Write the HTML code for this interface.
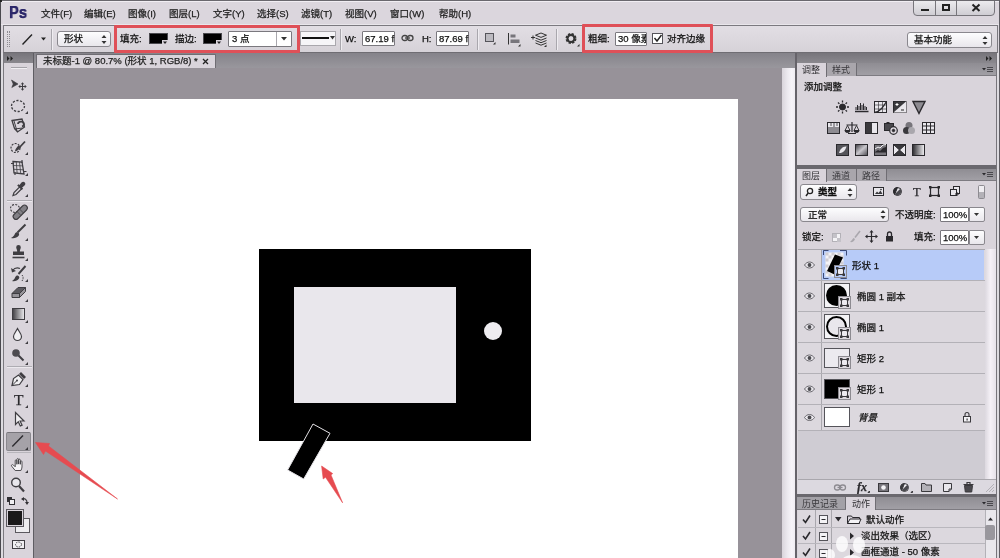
<!DOCTYPE html>
<html lang="zh-CN"><head><meta charset="utf-8"><title>Ps</title>
<style>
*{box-sizing:border-box;margin:0;padding:0}
html,body{width:1000px;height:558px;overflow:hidden;background:#dbd6dd}
body{position:relative;font-family:"Liberation Sans","Noto Sans CJK SC",sans-serif;font-size:11px;color:#111;line-height:1}
.a{position:absolute}
.t{position:absolute;white-space:nowrap;will-change:transform;-webkit-text-stroke:.25px currentColor}
#menubar{left:0;top:0;width:1000px;height:25px;background:#dbd6dd;border-top:2px solid #f1eef3;border-bottom:1px solid #e9e6eb}
#optbar{left:3px;top:25px;width:995px;height:28px;background:linear-gradient(#e2dee4,#d6d2d8);border:1px solid #7b797f;border-bottom-color:#6f6d73}
#work{left:0;top:53px;width:797px;height:505px;background:#979299}
.mi{top:9px;font-size:9.5px;color:#222}
.field{background:#fff;border:1px solid #7a787e;border-radius:1px}
.dd{background:linear-gradient(#fdfdfe,#e9e7ec);border:1px solid #8a888e;border-radius:3px}
.pt{font-size:9px;color:#2e2d31;margin-top:.5px;-webkit-text-stroke:0}
.ln{font-size:9.5px;color:#111}
.lr{left:798px;width:187px;height:1px;background:#b3b1b7}
</style></head><body>
<!-- MENUBAR -->
<div id="menubar" class="a"></div>
<div class="t" style="left:8.500px;top:4.500px;font-size:16px;font-weight:bold;color:#2b2669;text-shadow:0 0 .6px #2b2669;transform:scaleX(.92);transform-origin:0 0">Ps</div>
<div class="t mi" id="m1" style="left:41px">文件(F)</div>
<div class="t mi" id="m2" style="left:84px">编辑(E)</div>
<div class="t mi" id="m3" style="left:128px">图像(I)</div>
<div class="t mi" id="m4" style="left:169px">图层(L)</div>
<div class="t mi" id="m5" style="left:213px">文字(Y)</div>
<div class="t mi" id="m6" style="left:257px">选择(S)</div>
<div class="t mi" id="m7" style="left:301px">滤镜(T)</div>
<div class="t mi" id="m8" style="left:345px">视图(V)</div>
<div class="t mi" id="m9" style="left:390px">窗口(W)</div>
<div class="t mi" id="m10" style="left:438.500px">帮助(H)</div>
<div class="a" style="left:913px;top:-3px;width:82px;height:19px;border:1px solid #77757b;border-radius:0 0 4px 4px;background:linear-gradient(#f2f1f4,#cfcdd3)"></div>
<div class="a" style="left:935px;top:0;width:1px;height:15px;background:#77757b"></div>
<div class="a" style="left:956px;top:0;width:1px;height:15px;background:#77757b"></div>
<div class="a" style="left:921px;top:9px;width:8px;height:2px;background:#222"></div>
<div class="a" style="left:942px;top:4px;width:8px;height:7px;border:2px solid #222;border-top-width:2px"></div>
<svg class="a" style="left:971px;top:3px" width="10" height="10"><path d="M1.500 1.500l7 6.500M8.500 1.500l-7 6.500" stroke="#222" stroke-width="2" fill="none"/></svg>

<!-- OPTBAR -->
<div id="optbar" class="a"></div>
<div class="a" style="left:7px;top:31px;width:3px;height:16px;border-left:1px dotted #8d8b91;border-right:1px dotted #8d8b91"></div>
<svg class="a" style="left:20px;top:30px" width="30" height="18"><path d="M2.500 14.500l9.500-10" stroke="#222" stroke-width="1.400" fill="none"/><path d="M21 7.500h5l-2.500 3z" fill="#222"/></svg>
<div class="a" style="left:51px;top:29px;width:1px;height:21px;background:#a9a7ad;border-right:1px solid #efedf1;box-sizing:content-box"></div>
<div class="a dd" style="left:57px;top:31px;width:54px;height:16px"></div>
<div class="t" style="left:64px;top:34px;font-size:9.5px">形状</div>
<svg class="a" style="left:101px;top:35px" width="6" height="9"><path d="M3 0l2.500 3h-5zM3 9l2.500-3h-5z" fill="#333"/></svg>
<div class="a" style="left:114px;top:25px;width:186px;height:28px;border:3px solid #df5058;border-radius:1px"></div>
<div class="t" style="left:120px;top:34px;font-size:9.5px">填充:</div>
<div class="a" style="left:149px;top:33px;width:19px;height:11px;background:#000;border:1px solid #4a494e"></div>
<svg class="a" style="left:162px;top:40px" width="6" height="5"><rect width="6" height="5" fill="#d9d4db"/><path d="M1 1.500h4l-2 2.500z" fill="#222"/></svg>
<div class="t" style="left:175px;top:34px;font-size:9.5px">描边:</div>
<div class="a" style="left:203px;top:33px;width:19px;height:11px;background:#000;border:1px solid #4a494e"></div>
<svg class="a" style="left:216px;top:40px" width="6" height="5"><rect width="6" height="5" fill="#d9d4db"/><path d="M1 1.500h4l-2 2.500z" fill="#222"/></svg>
<div class="a field" style="left:228px;top:31px;width:64px;height:16px"></div>
<div class="a" style="left:276px;top:32px;width:1px;height:14px;background:#a9a7ad"></div>
<div class="t" style="left:232px;top:34px;font-size:9.5px">3 点</div>
<svg class="a" style="left:281px;top:37px" width="7" height="4"><path d="M0 0h6l-3 3.500z" fill="#333"/></svg>
<div class="a" style="left:300px;top:31px;width:36px;height:15px;background:#f6f5f8;border:1px solid #a9a7ad"></div>
<div class="a" style="left:302px;top:37px;width:27px;height:2px;background:#111"></div>
<svg class="a" style="left:330px;top:36px" width="6" height="4"><path d="M0 0h5l-2.500 3.500z" fill="#333"/></svg>
<div class="a" style="left:340px;top:29px;width:1px;height:21px;background:#a9a7ad;border-right:1px solid #efedf1;box-sizing:content-box"></div>
<div class="t" style="left:345px;top:34px;font-size:9.5px">W:</div>
<div class="a field" style="left:362px;top:31px;width:33px;height:15px"></div>
<div class="t" style="left:365px;top:34px;font-size:9.5px">67.19 f</div>
<svg class="a" style="left:401px;top:34px" width="13" height="8" fill="none" stroke="#444" stroke-width="1.300"><rect x="1" y="1.500" width="5.500" height="5" rx="2.500"/><rect x="6.500" y="1.500" width="5.500" height="5" rx="2.500"/><path d="M4 4h5"/></svg>
<div class="t" style="left:422px;top:34px;font-size:9.5px">H:</div>
<div class="a field" style="left:436px;top:31px;width:33px;height:15px"></div>
<div class="t" style="left:439px;top:34px;font-size:9.5px">87.69 f</div>
<div class="a" style="left:477px;top:29px;width:1px;height:21px;background:#a9a7ad;border-right:1px solid #efedf1;box-sizing:content-box"></div>
<svg class="a" style="left:484px;top:31px" width="100" height="18" fill="none" stroke="#333">
<rect x="1.500" y="2.500" width="8" height="8" fill="#bcbac0" stroke="#55545a"/>
<path d="M9 13.500h2.500v-2.500z" fill="#333" stroke="none"/>
<path d="M24.500 2v11.500"/><rect x="26.500" y="3.500" width="5" height="3" fill="#77757b" stroke="none"/><rect x="26.500" y="8.500" width="9" height="3.500" fill="#77757b" stroke="none"/>
<path d="M34 15.500h2.500v-2.500z" fill="#333" stroke="none"/>
<path d="M47 6.500h4M49 4.500v4" stroke-width="1"/>
<path d="M56 2.500l5.500 2.200-5.500 2.200-5.500-2.200zM50.500 7.500l5.500 2.200 5.500-2.200M50.500 10l5.500 2.200 5.500-2.200M50.500 12.500l5.500 2.200 5.500-2.200" stroke-width="1" transform="translate(1 -0.500)"/>
<path d="M60 16h2.500v-2.500z" fill="#333" stroke="none"/>
</svg>
<div class="a" style="left:556px;top:29px;width:1px;height:21px;background:#a9a7ad;border-right:1px solid #efedf1;box-sizing:content-box"></div>
<svg class="a" style="left:564px;top:31px" width="18" height="18"><circle cx="7" cy="7.500" r="4" fill="none" stroke="#333" stroke-width="3" stroke-dasharray="2 1.140"/><circle cx="7" cy="7.500" r="3.500" fill="none" stroke="#333" stroke-width="2"/><path d="M13 15.500h2.500v-2.500z" fill="#333"/></svg>
<div class="a" style="left:582px;top:24px;width:131px;height:29px;border:3px solid #df5058;border-radius:1px"></div>
<div class="t" style="left:588px;top:34px;font-size:9.5px">粗细:</div>
<div class="a field" style="left:615px;top:32px;width:32px;height:14px;overflow:hidden"></div>
<div class="t" style="left:618px;top:34px;font-size:9.5px;width:28px;overflow:hidden">30 像素</div>
<div class="a" style="left:652px;top:33px;width:11px;height:11px;background:#fff;border:1px solid #55545a"></div>
<svg class="a" style="left:653px;top:34px" width="10" height="9"><path d="M1.500 4l2.500 3 4.500-6" stroke="#222" stroke-width="1.400" fill="none"/></svg>
<div class="t" style="left:667px;top:34px;font-size:9.5px">对齐边缘</div>
<div class="a dd" style="left:907px;top:32px;width:85px;height:16px"></div>
<div class="t" style="left:914px;top:35px;font-size:9.5px">基本功能</div>
<svg class="a" style="left:982px;top:36px" width="6" height="9"><path d="M3 0l2.500 3h-5zM3 9l2.500-3h-5z" fill="#333"/></svg>

<!-- WORK -->
<div id="work" class="a"></div>
<div class="a" style="left:34px;top:53px;width:763px;height:15px;background:linear-gradient(#85838a,#99979d)"></div>
<div class="a" style="left:36px;top:54px;width:180px;height:14px;background:#d9d4db;border:1px solid #6f6d73;border-bottom:none;border-radius:1px 1px 0 0"></div>
<div class="t" style="left:43px;top:56px;font-size:9.5px;color:#222">未标题-1 @ 80.7% (形状 1, RGB/8) *</div>
<svg class="a" style="left:202px;top:58px" width="7" height="7"><path d="M1 1l5 5M6 1l-5 5" stroke="#222" stroke-width="1.300"/></svg>
<div class="a" style="left:80px;top:99px;width:658px;height:459px;background:#fff"></div>
<div class="a" style="left:782px;top:68px;width:13px;height:490px;background:linear-gradient(90deg,#d9d4db,#ebe8ee 40%,#f7f4f9 75%,#efecf2)"></div>
<div class="a" style="left:795px;top:53px;width:2px;height:505px;background:#66636a"></div>
<div class="a" style="left:259px;top:249px;width:272px;height:192px;background:#000"></div>
<div class="a" style="left:294px;top:287px;width:162px;height:116px;background:#e9e7ec"></div>
<div class="a" style="left:484px;top:322px;width:18px;height:18px;border-radius:50%;background:#eeecf0"></div>
<svg class="a" style="left:0;top:53px" width="797" height="505" viewBox="0 53 797 505">
<path d="M313 424L330 433.300 303.700 479 287.600 470z" fill="#000" stroke="#e4e2e6" stroke-width="1"/>
<path d="M309 440.500L291 470 303.500 477 324.500 440.500z" fill="#000" stroke="none"/>
<path d="M321.600 466L332.700 473.600 331 475 342.600 502.800 325.500 477.200 323.200 479z" fill="#e64b50" stroke="#e64b50" stroke-width=".6" stroke-linejoin="round"/>
<path d="M35.500 442.500L49.500 443.500 48.500 446 117.500 499 45.500 451 43.500 454.500z" fill="#e64b50" stroke="#e64b50" stroke-width=".6" stroke-linejoin="round"/>
</svg>

<!-- TOOLS -->
<div class="a" style="left:0;top:53px;width:5px;height:505px;background:#dddbe0"></div>
<div class="a" style="left:3px;top:53px;width:31px;height:505px;background:#d9d4db;border-left:1px solid #7b797f;border-right:1px solid #5f5d63"></div>
<div class="a" style="left:4px;top:53px;width:29px;height:10px;background:linear-gradient(#77757b,#8a888e)"></div>
<svg class="a" style="left:7px;top:56px" width="8" height="5"><path d="M0 0l2.500 2.500-2.500 2.500zM3.500 0l2.500 2.500-2.500 2.500z" fill="#222"/></svg>
<div class="a" style="left:11px;top:67px;width:16px;height:2px;border-top:1px solid #a5a3a9;border-bottom:1px solid #f0eef2"></div>
<div class="a" style="left:6px;top:432px;width:25px;height:19px;background:#a5a2a8;border:1px solid #8a888e;border-top-color:#77757b;border-radius:2px"></div>
<svg class="a" style="left:0;top:53px;opacity:.88" width="40" height="505" viewBox="0 53 40 505" fill="none" stroke="#2a292d" stroke-width="1.2">
<g id="corner-tris" fill="#2a292d" stroke="none">
<path d="M28 111v3h-3zM28 131v3h-3zM28 152v3h-3zM28 173v3h-3zM28 194v3h-3zM28 217v3h-3zM28 238v3h-3zM28 258v3h-3zM28 279v3h-3zM28 299v3h-3zM28 320v3h-3zM28 341v3h-3zM28 362v3h-3zM28 384v3h-3zM28 405v3h-3zM28 426v3h-3zM28 447v3h-3zM28 470v3h-3z"/>
</g>
<!-- move -->
<path d="M11.500 80L18 84 11.800 87.500 13.200 84z" fill="#2a292d" stroke="#2a292d" stroke-width=".6" stroke-linejoin="round"/>
<path d="M22.500 83.500v6M19.500 86.500h6" stroke-width="1"/>
<path d="M22.500 82.300l1.700 2h-3.400zM22.500 90.700l1.700-2h-3.400zM18.300 86.500l2-1.700v3.400zM26.700 86.500l-2-1.700v3.400z" fill="#2a292d" stroke="none"/>
<!-- ellipse marquee -->
<ellipse cx="18" cy="106" rx="6.500" ry="5.500" stroke-dasharray="2.200 1.500" stroke-width="1.300"/>
<!-- poly lasso -->
<path d="M12 120.500l10-1.500 2.500 8-7 5-3-3.500z" stroke-width="1.300"/>
<path d="M14 121l3 10M14.500 129l8-1" stroke-width="1"/>
<path d="M18 124a3 2.500 0 1 1 4 2.500" stroke-width="1.800"/>
<!-- quick select -->
<ellipse cx="15.500" cy="148" rx="4.500" ry="4.500" stroke-dasharray="2 1.300" stroke-width="1.200"/>
<path d="M25 141.500l-6 6.500" stroke-width="1.800"/>
<path d="M15 151.500c2-.500 4.500-2 5.500-4.500l-2-1.500c-1.500 1.500-3.500 3.500-3.500 6z" fill="#2a292d" stroke="none"/>
<!-- crop/perspective -->
<path d="M13 161.500l9 .5 2 12-10-1z" stroke-width="1.300"/>
<path d="M11 163.500h3M22 160v3M24 171.500h2.500M15 172v3" stroke-width="1.200"/>
<path d="M16.300 162l.8 11M19.500 162l1.200 11.500M13.300 165.500l9.500.4M13.700 169.300l9.800.5" stroke-width=".8"/>
<!-- eyedropper -->
<path d="M13 195.500l1-3 6-6 2 2-6 6z" stroke-width="1.200"/>
<path d="M19.500 185l2-2.500c1-1 2.500-1 3.300 0s.7 2-.3 3l-2.500 2.300 1 1-1.300 1.300-4.500-4.500 1.300-1.300z" fill="#2a292d" stroke="none"/>
<!-- sep -->
<path d="M7 200.500h25" stroke="#a9a7ad" stroke-width="1"/>
<path d="M7 201.500h25" stroke="#efedf1" stroke-width="1"/>
<!-- healing -->
<ellipse cx="15" cy="208.500" rx="4.500" ry="4" stroke-dasharray="2 1.300" stroke-width="1.100"/>
<path d="M14 214.500l8.500-8.500a2.800 2.800 0 0 1 4 4l-8.500 8.500a2.800 2.800 0 0 1-4-4z" fill="#77757b" stroke="#2a292d" stroke-width="1.100"/>
<path d="M17 211.500l4 4M19.500 209l4 4" stroke-width=".8"/>
<!-- brush -->
<path d="M25.500 224.500l-8 8" stroke-width="2"/>
<path d="M11 238c3 .8 6-.2 7.800-2.500 .8-1.200.2-2.500-1-3-1.300-.5-2.500.3-3 1.500-.6 1.800-2 3.200-3.800 4z" fill="#2a292d" stroke="none"/>
<!-- stamp -->
<path d="M18.500 245a2.300 2.300 0 0 1 2.300 2.300c0 1.500-1 2.200-1 4.200h4.200v3.500h-11v-3.500h4.200c0-2-1-2.700-1-4.200a2.300 2.300 0 0 1 2.300-2.300z" fill="#2a292d" stroke="none"/>
<path d="M12.500 257.500h12" stroke-width="1.600"/>
<!-- history brush -->
<path d="M25.500 266l-7 8" stroke-width="1.900"/>
<path d="M12 281c2.800.6 5.500-.3 7-2.500.7-1.100.2-2.300-.9-2.800-1.200-.4-2.300.3-2.800 1.400-.5 1.700-1.700 3-3.300 3.900z" fill="#2a292d" stroke="none"/>
<path d="M12.500 270.500c2-2.500 5-3 7.500-2" stroke-width="1.200"/>
<path d="M11 268l1 4.500 4-1.500z" fill="#2a292d" stroke="none"/>
<path d="M22 275c1.500 1.500 1.500 4 0 6" stroke-width="1" stroke-dasharray="1.500 1"/>
<!-- eraser -->
<path d="M12 293.500l6-6h7.500l-6 6z" fill="#4a494e" stroke="#2a292d" stroke-width="1"/>
<path d="M12 293.500h7.500v4h-7.500zM19.500 293.500l6-6v4l-6 6z" fill="#8d8b91" stroke="#2a292d" stroke-width="1"/>
<!-- gradient -->
<defs><linearGradient id="gg" x1="0" x2="1"><stop offset="0" stop-color="#2a292d"/><stop offset="1" stop-color="#f4f3f6"/></linearGradient></defs>
<rect x="12.500" y="308.500" width="12" height="11" fill="url(#gg)" stroke="#2a292d" stroke-width="1"/>
<!-- blur drop -->
<path d="M17.500 328.500c-1.500 3-4 5.500-4 8a4 4 0 0 0 8 0c0-2.500-2.500-5-4-8z" fill="#f4f3f6" stroke-width="1.200"/>
<!-- dodge -->
<circle cx="16" cy="353" r="3.800" fill="#3a393d" stroke="none"/>
<path d="M18.500 355.500l5 5" stroke-width="2"/>
<!-- sep -->
<path d="M7 366.500h25" stroke="#a9a7ad" stroke-width="1"/>
<path d="M7 367.500h25" stroke="#efedf1" stroke-width="1"/>
<!-- pen -->
<path d="M12 385.500l1.500-7 5-3.500 4.500 4.500-3.500 5z" fill="#f4f3f6" stroke-width="1.200"/>
<path d="M12 385.500l4.500-4.500" stroke-width="1"/>
<circle cx="17" cy="380.500" r="1" fill="#2a292d" stroke="none"/>
<path d="M19 374l2-2 5 5-2 2z" fill="#2a292d" stroke="none"/>
<!-- path select -->
<path d="M15.500 412.500v12l2.800-2.800 2 4.300 1.800-.8-2-4.200h3.900z" fill="#f4f3f6" stroke-width="1.200"/>
<!-- line -->
<path d="M12.300 446.500L23 435.500" stroke="#1c1b1f" stroke-width="1.400"/>
<!-- sep -->
<path d="M7 452.500h24" stroke="#b3b1b7" stroke-width="1"/>
<!-- hand -->
<path d="M15.200 470.500l-3.500-4.300c-.9-1.200.7-2.200 1.700-1.200l1.800 1.800v-6c0-1.300 1.700-1.300 1.700 0v3.500-4.800c0-1.300 1.700-1.300 1.700 0v4.600-4c0-1.300 1.700-1.300 1.700 0v4.200-2.500c0-1.200 1.700-1.200 1.700 0v5.200c0 1.600-.7 2.300-1.100 3.500z" fill="#faf9fb" stroke="#2a292d" stroke-width=".9" stroke-linejoin="round"/>
<!-- zoom -->
<circle cx="16" cy="482.500" r="4.300" fill="#eceaef" stroke-width="1.400"/>
<path d="M19 486l5 5.500" stroke-width="2.200"/>
<!-- default colors / swap -->
<rect x="7" y="497" width="5" height="5" fill="#1c1b1f" stroke="none"/>
<rect x="9.500" y="499.500" width="5" height="5" fill="#f4f3f6" stroke="#1c1b1f" stroke-width="1"/>
<path d="M22.500 499c2.500-1 4.500 1 4.500 3.500" stroke-width="1.200"/>
<path d="M21 499l3-2v4zM27 505l-2-3h4z" fill="#1c1b1f" stroke="none"/>
<!-- fg/bg -->
<rect x="15.500" y="518.500" width="14" height="14" fill="#f2f1f4" stroke="#4a494e" stroke-width="1"/>
<rect x="7.500" y="510.500" width="15" height="15" fill="#000" stroke="#d9d4db" stroke-width="1"/>
<rect x="6.500" y="509.500" width="17" height="17" fill="none" stroke="#4a494e" stroke-width="1"/>
<!-- quick mask -->
<rect x="12.500" y="540.500" width="12" height="8" fill="#f4f3f6" stroke-width="1"/>
<ellipse cx="18.500" cy="544.500" rx="3" ry="2.500" stroke-dasharray="1.500 1" stroke-width="1"/>
</svg>
<div class="t" style="left:13.500px;top:392px;font-family:'Liberation Serif',serif;font-size:15.500px;color:#2a292d">T</div>

<!-- PANELS -->
<div class="a" style="left:797px;top:53px;width:203px;height:505px;background:#d9d4db"></div>
<div class="a" style="left:996px;top:53px;width:4px;height:505px;background:#dddbe0;border-left:1px solid #77757b"></div>
<div class="a" style="left:797px;top:53px;width:199px;height:10px;background:linear-gradient(#77757b,#8a888e)"></div>
<svg class="a" style="left:986px;top:56px" width="8" height="5"><path d="M0 0l2.500 2.500-2.500 2.500zM3.500 0l2.500 2.500-2.500 2.500z" fill="#222"/></svg>
<!-- adjustments -->
<div class="a" style="left:797px;top:63px;width:199px;height:13px;background:linear-gradient(#8f8d93,#a19fa5);border-bottom:1px solid #7d7b81"></div>
<div class="a" style="left:797px;top:63px;width:30px;height:14px;background:#d9d4db;border-right:1px solid #6f6d73"></div>
<div class="a" style="left:827px;top:63px;width:30px;height:13px;background:#a9a6ac;border-right:1px solid #6f6d73"></div>
<div class="t pt" style="left:802px;top:65px">调整</div>
<div class="t pt" style="left:832px;top:65px;color:#3a393d">样式</div>
<svg class="a" style="left:982px;top:66px" width="12" height="8"><path d="M0 2h4l-2 2.500z" fill="#2a292d"/><path d="M5 1.500h6M5 3.500h6M5 5.500h6" stroke="#4a494e" stroke-width="1"/></svg>
<div class="t" style="left:804px;top:82px;font-size:9.5px">添加调整</div>
<svg class="a" style="left:797px;top:95px" width="199" height="70" viewBox="797 95 199 70" fill="none" stroke="#2a292d" stroke-width="1">
<!-- row1 -->
<circle cx="842.500" cy="107" r="3" fill="#2a292d"/><path d="M842.500 100.500v2M842.500 111.500v2M836 107h2M847 107h2M838 102.500l1.400 1.400M845.600 110.100l1.400 1.400M847 102.500l-1.400 1.400M839.400 110.100l-1.400 1.400" stroke-width="1.300"/>
<path d="M855 111.500h13.500" stroke-width="1.500"/><path d="M856 110v-3M857.500 110v-5M859 110v-4M860.500 110v-7M862 110v-5M863.500 110v-6.500M865 110v-4M866.500 110v-3" stroke-width="1"/>
<rect x="874.500" y="101.500" width="12" height="11" fill="#e9e7ec"/><path d="M874.500 105h12M874.500 109h12M878.500 101.500v11M882.500 101.500v11" stroke-width=".6"/><path d="M874.500 112.500c6-1 9-6 12-11" stroke-width="1.300"/>
<rect x="893.500" y="101.500" width="12.500" height="11" fill="#3a393d"/><path d="M893.500 112.500l12.500-11v11z" fill="#e9e7ec" stroke="none"/><path d="M895.500 104.500h3M897 103v3" stroke="#fff" stroke-width="1"/><path d="M901 110h3" stroke="#222" stroke-width="1"/>
<path d="M913 101.500h12l-6 12z" fill="#8d8b91" stroke-width="1.400"/>
<!-- row2 -->
<rect x="827.500" y="122.500" width="12" height="11" fill="#8d8b91"/><rect x="828" y="123" width="11" height="4" fill="#e9e7ec" stroke="none"/><path d="M831 123v3M834 123v4M837 123v3" stroke-width=".8"/>
<path d="M852 122v10M846.500 125h11M848 133.500h8" stroke-width="1.200"/><path d="M845 130.500h5l-2.500-5zM854 130.500h5l-2.500-5z" stroke-width=".9"/><path d="M845 130.500a2.500 2 0 0 0 5 0zM854 130.500a2.500 2 0 0 0 5 0z" fill="#2a292d"/>
<rect x="865.500" y="122.500" width="12" height="11" fill="#e9e7ec"/><rect x="866" y="123" width="6" height="10" fill="#3a393d" stroke="none"/>
<rect x="884.500" y="123.500" width="9" height="7" fill="#4a494e"/><rect x="886.500" y="122" width="3" height="1.500" fill="#2a292d" stroke="none"/><circle cx="893.500" cy="130.500" r="3.800" fill="#d9d4db" stroke-width="1.200"/><circle cx="893.500" cy="130.500" r="1.200" fill="#2a292d"/>
<circle cx="909" cy="125.500" r="3.500" fill="#77757b" stroke="none"/><circle cx="906.500" cy="130.500" r="3.500" fill="#3a393d" stroke="none"/><circle cx="911.500" cy="130.500" r="3.500" fill="#a9a7ad" stroke="none"/>
<rect x="922.500" y="122.500" width="12" height="11" fill="#e9e7ec"/><path d="M922.500 126h12M922.500 130h12M926.500 122.500v11M930.500 122.500v11" stroke-width="1"/>
<!-- row3 -->
<rect x="836.500" y="144.500" width="12" height="11" fill="#55545a"/><path d="M839 153c1-4 4-7 7.500-6.500-1 4-4 7-7.500 6.500z" fill="#e9e7ec" stroke="none"/>
<defs><linearGradient id="g3a" x1="0" y1="0" x2="1" y2="1"><stop offset="0" stop-color="#3a393d"/><stop offset=".5" stop-color="#c9c7cd"/><stop offset="1" stop-color="#4a494e"/></linearGradient><linearGradient id="g3b" x1="0" x2="1"><stop offset="0" stop-color="#2a292d"/><stop offset="1" stop-color="#f4f3f6"/></linearGradient></defs>
<rect x="855.500" y="144.500" width="12" height="11" fill="url(#g3a)"/>
<rect x="874.500" y="144.500" width="12" height="11" fill="#77757b"/><path d="M875 152l3-2 2 1 3-3 3-1v5.500h-11z" fill="#2a292d" stroke="none"/><path d="M875 149l3-2 2 1 3-3 3-.5" stroke="#f4f3f6" stroke-width="1"/>
<rect x="893.500" y="144.500" width="12" height="11" fill="#e9e7ec"/><path d="M893.500 144.500h12l-6 5.500zM893.500 155.500h12l-6-5.500z" fill="#3a393d"/>
<rect x="912.500" y="144.500" width="12" height="11" fill="url(#g3b)"/>
</svg>
<!-- layers panel -->
<div class="a" style="left:797px;top:165px;width:199px;height:4px;background:#6a686e"></div>
<div class="a" style="left:797px;top:169px;width:199px;height:12px;background:linear-gradient(#8f8d93,#a19fa5);border-bottom:1px solid #7d7b81"></div>
<div class="a" style="left:797px;top:169px;width:30px;height:13px;background:#d9d4db;border-right:1px solid #6f6d73"></div>
<div class="a" style="left:827px;top:169px;width:30px;height:12px;background:#a9a6ac;border-right:1px solid #6f6d73"></div>
<div class="a" style="left:857px;top:169px;width:30px;height:12px;background:#a9a6ac;border-right:1px solid #6f6d73"></div>
<div class="t pt" style="left:802px;top:171px">图层</div>
<div class="t pt" style="left:832px;top:171px;color:#3a393d">通道</div>
<div class="t pt" style="left:862px;top:171px;color:#3a393d">路径</div>
<svg class="a" style="left:982px;top:171px" width="12" height="8"><path d="M0 2h4l-2 2.500z" fill="#2a292d"/><path d="M5 1.500h6M5 3.500h6M5 5.500h6" stroke="#4a494e" stroke-width="1"/></svg>
<div class="a dd" style="left:800px;top:184px;width:57px;height:16px"></div>
<svg class="a" style="left:805px;top:187px" width="9" height="10"><circle cx="5" cy="4" r="2.600" fill="none" stroke="#222" stroke-width="1.300"/><path d="M3.200 6l-2.200 3" stroke="#222" stroke-width="1.500"/></svg>
<div class="t" style="left:818px;top:187px;font-size:9.5px;font-weight:bold">类型</div>
<svg class="a" style="left:847px;top:188px" width="6" height="9"><path d="M3 0l2.500 3h-5zM3 9l2.500-3h-5z" fill="#333"/></svg>
<svg class="a" style="left:870px;top:184px" width="120" height="17" viewBox="870 184 120 17" fill="none" stroke="#2a292d" stroke-width="1">
<rect x="873.500" y="187.500" width="10" height="8" fill="#e9e7ec"/><path d="M875 194l2-2.500 1.500 1.500 2-2.500 2 3.500z" fill="#3a393d" stroke="none"/><circle cx="881" cy="189.500" r=".8" fill="#2a292d" stroke="none"/>
<circle cx="897.500" cy="191.500" r="4" fill="#e9e7ec"/><path d="M897.500 187.500a4 4 0 0 0-2.800 6.800z" fill="#2a292d"/><path d="M894.700 194.300a4 4 0 0 0 5.600-5.600z" fill="#4a494e" stroke="none"/>
<rect x="930.500" y="187.500" width="8" height="8" stroke-width="1.200"/><rect x="929" y="186" width="2.500" height="2.500" fill="#2a292d" stroke="none"/><rect x="937.500" y="186" width="2.500" height="2.500" fill="#2a292d" stroke="none"/><rect x="929" y="194.500" width="2.500" height="2.500" fill="#2a292d" stroke="none"/><rect x="937.500" y="194.500" width="2.500" height="2.500" fill="#2a292d" stroke="none"/>
<rect x="953.500" y="186.500" width="6" height="7" fill="#e9e7ec"/><rect x="950.500" y="189.500" width="6" height="6" fill="#e9e7ec"/><path d="M957 192v4M955 194h4" stroke-width="1"/>
<rect x="978.500" y="185.500" width="6" height="13" rx="1" fill="#b3b1b7" stroke="#8d8b91"/><rect x="979" y="186" width="5" height="6" fill="#efedf1" stroke="none"/>
</svg>
<div class="t" style="left:913px;top:186px;font-family:'Liberation Serif',serif;font-size:12.5px;color:#2a292d">T</div>
<div class="a dd" style="left:800px;top:207px;width:89px;height:15px"></div>
<div class="t" style="left:808px;top:210px;font-size:9.5px">正常</div>
<svg class="a" style="left:880px;top:210px" width="6" height="9"><path d="M3 0l2.500 3h-5zM3 9l2.500-3h-5z" fill="#333"/></svg>
<div class="t" style="left:895px;top:210px;font-size:9.5px">不透明度:</div>
<div class="a field" style="left:940px;top:207px;width:29px;height:15px"></div>
<div class="t" style="left:943px;top:210px;font-size:9.5px">100%</div>
<div class="a dd" style="left:969px;top:207px;width:16px;height:15px;border-radius:0 2px 2px 0"></div>
<svg class="a" style="left:974px;top:213px" width="6" height="4"><path d="M0 0h5l-2.500 3z" fill="#333"/></svg>
<div class="t" style="left:802px;top:232px;font-size:9.5px">锁定:</div>
<svg class="a" style="left:830px;top:229px" width="70" height="16" viewBox="830 229 70 16" fill="none" stroke="#2a292d" stroke-width="1">
<rect x="832.500" y="233.500" width="8" height="8" fill="#f4f3f6" stroke="#b3b1b7"/><path d="M833 234h4v4h-4zM837 238h4v4h-4z" fill="#c4c2c8" stroke="none"/>
<path d="M860 231l-5 6.500" stroke="#a9a7ad" stroke-width="1.600"/><path d="M850 242c2 .5 4.500-.5 5-3l-1.500-1c-1 .5-1.500 2.500-3.500 4z" fill="#a9a7ad" stroke="none"/>
<path d="M871.500 231.500v10M866.500 236.500h10" stroke-width="1.200"/><path d="M871.500 230l2 2.500h-4zM871.500 243l2-2.500h-4zM865 236.500l2.500-2v4zM878 236.500l-2.500-2v4z" fill="#2a292d" stroke="none"/>
<rect x="886" y="236" width="7" height="5.500" fill="#2a292d" stroke="none"/><path d="M887.500 236v-2a2 2 0 0 1 4 0v2" stroke-width="1.300"/>
</svg>
<div class="t" style="left:914px;top:232px;font-size:9.5px">填充:</div>
<div class="a field" style="left:940px;top:230px;width:29px;height:15px"></div>
<div class="t" style="left:943px;top:233px;font-size:9.5px">100%</div>
<div class="a dd" style="left:969px;top:230px;width:16px;height:15px;border-radius:0 2px 2px 0"></div>
<svg class="a" style="left:974px;top:236px" width="6" height="4"><path d="M0 0h5l-2.500 3z" fill="#333"/></svg>
<!-- layer list -->
<div class="a" style="left:798px;top:249px;width:187px;height:182px;background:#dcd8de;border-top:1px solid #a9a7ad"></div>
<div class="a" style="left:798px;top:431px;width:187px;height:48px;background:#cfccd3"></div>
<div class="a" style="left:985px;top:249px;width:11px;height:230px;background:linear-gradient(90deg,#dcd8df,#f5f1f7 50%,#e6e2e9)"></div>
<div class="a" style="left:822px;top:250px;width:162px;height:30px;background:#b7cbf8"></div>
<div class="a" style="left:821px;top:249px;width:1px;height:182px;background:#a9a7ad"></div>
<div class="a lr" style="top:280px"></div><div class="a lr" style="top:311px"></div><div class="a lr" style="top:342px"></div><div class="a lr" style="top:373px"></div><div class="a lr" style="top:404px"></div><div class="a lr" style="top:430px"></div>
<svg class="a" style="left:798px;top:249px" width="187" height="182" viewBox="798 249 187 182" fill="none">
<g transform="translate(809.5 265)"><path d="M-5 0c2.500-4 7.500-4 10 0-2.500 4-7.500 4-10 0z" fill="#e9e7ec" stroke="#6a686e" stroke-width="1"/><circle r="1.900" fill="#4a494e"/></g><g transform="translate(809.5 296)"><path d="M-5 0c2.500-4 7.500-4 10 0-2.500 4-7.500 4-10 0z" fill="#e9e7ec" stroke="#6a686e" stroke-width="1"/><circle r="1.900" fill="#4a494e"/></g><g transform="translate(809.5 327)"><path d="M-5 0c2.500-4 7.500-4 10 0-2.500 4-7.500 4-10 0z" fill="#e9e7ec" stroke="#6a686e" stroke-width="1"/><circle r="1.900" fill="#4a494e"/></g><g transform="translate(809.5 358)"><path d="M-5 0c2.500-4 7.500-4 10 0-2.500 4-7.500 4-10 0z" fill="#e9e7ec" stroke="#6a686e" stroke-width="1"/><circle r="1.900" fill="#4a494e"/></g><g transform="translate(809.5 389)"><path d="M-5 0c2.500-4 7.500-4 10 0-2.500 4-7.500 4-10 0z" fill="#e9e7ec" stroke="#6a686e" stroke-width="1"/><circle r="1.900" fill="#4a494e"/></g><g transform="translate(809.5 417.5)"><path d="M-5 0c2.500-4 7.500-4 10 0-2.500 4-7.500 4-10 0z" fill="#e9e7ec" stroke="#6a686e" stroke-width="1"/><circle r="1.900" fill="#4a494e"/></g>
<!-- shape 1 thumb -->
<rect x="825.500" y="252.500" width="18" height="24" fill="#f4f3f6" stroke="none"/>
<path d="M825.500 252.500h3v3h-3zM831.500 252.500h3v3h-3zM837.500 252.500h3v3h-3zM828.500 255.500h3v3h-3zM834.500 255.500h3v3h-3zM840.500 255.500h3v3h-3zM825.500 258.500h3v3h-3zM840.500 261.500h3v3h-3zM825.500 264.500h3v3h-3zM825.500 270.500h3v3h-3zM828.500 273.500h3v3h-3z" fill="#d0ced4"/>
<path d="M835 254.500l8 3-8.500 17-7.500-3.500z" fill="#000"/>
<path d="M823.500 255v-4.500h5M840 250.500h6.500v5M823.500 273v5.500h5M846.500 274v4.500h-6" stroke="#3b4a78" stroke-width="1"/>
<rect x="834.5" y="265.5" width="12" height="12" fill="#b5c9f7" stroke="#8d8b91" stroke-width="1"/><rect x="837.5" y="268.5" width="6" height="6" fill="#eceaef" stroke="#3a393d" stroke-width="1"/><rect x="836" y="267" width="2.500" height="2.500" fill="#3a393d"/><rect x="842.5" y="267" width="2.500" height="2.500" fill="#3a393d"/><rect x="836" y="273.5" width="2.500" height="2.500" fill="#3a393d"/><rect x="842.5" y="273.5" width="2.500" height="2.500" fill="#3a393d"/>
<!-- ellipse copy -->
<rect x="824.500" y="283.500" width="25" height="24" fill="#f4f3f6" stroke="#55545a"/>
<circle cx="836.500" cy="295.500" r="10.500" fill="#000"/>
<rect x="838.5" y="296.5" width="12" height="12" fill="#dcd8de" stroke="#8d8b91" stroke-width="1"/><rect x="841.5" y="299.5" width="6" height="6" fill="#eceaef" stroke="#3a393d" stroke-width="1"/><rect x="840" y="298" width="2.500" height="2.500" fill="#3a393d"/><rect x="846.5" y="298" width="2.500" height="2.500" fill="#3a393d"/><rect x="840" y="304.5" width="2.500" height="2.500" fill="#3a393d"/><rect x="846.5" y="304.5" width="2.500" height="2.500" fill="#3a393d"/>
<rect x="824.500" y="314.500" width="25" height="24" fill="#f4f3f6" stroke="#55545a"/>
<circle cx="836.500" cy="326.500" r="9.500" fill="#e9e7ec" stroke="#000" stroke-width="2"/>
<rect x="838.5" y="327.5" width="12" height="12" fill="#dcd8de" stroke="#8d8b91" stroke-width="1"/><rect x="841.5" y="330.5" width="6" height="6" fill="#eceaef" stroke="#3a393d" stroke-width="1"/><rect x="840" y="329" width="2.500" height="2.500" fill="#3a393d"/><rect x="846.5" y="329" width="2.500" height="2.500" fill="#3a393d"/><rect x="840" y="335.5" width="2.500" height="2.500" fill="#3a393d"/><rect x="846.5" y="335.5" width="2.500" height="2.500" fill="#3a393d"/>
<rect x="824.500" y="348.500" width="25" height="19" fill="#eceaef" stroke="#55545a"/>
<rect x="838.5" y="356.5" width="12" height="12" fill="#dcd8de" stroke="#8d8b91" stroke-width="1"/><rect x="841.5" y="359.5" width="6" height="6" fill="#eceaef" stroke="#3a393d" stroke-width="1"/><rect x="840" y="358" width="2.500" height="2.500" fill="#3a393d"/><rect x="846.5" y="358" width="2.500" height="2.500" fill="#3a393d"/><rect x="840" y="364.5" width="2.500" height="2.500" fill="#3a393d"/><rect x="846.5" y="364.5" width="2.500" height="2.500" fill="#3a393d"/>
<rect x="824.500" y="379.500" width="25" height="19" fill="#000" stroke="#55545a"/>
<rect x="838.5" y="387.5" width="12" height="12" fill="#dcd8de" stroke="#8d8b91" stroke-width="1"/><rect x="841.5" y="390.5" width="6" height="6" fill="#eceaef" stroke="#3a393d" stroke-width="1"/><rect x="840" y="389" width="2.500" height="2.500" fill="#3a393d"/><rect x="846.5" y="389" width="2.500" height="2.500" fill="#3a393d"/><rect x="840" y="395.5" width="2.500" height="2.500" fill="#3a393d"/><rect x="846.5" y="395.5" width="2.500" height="2.500" fill="#3a393d"/>
<rect x="824.500" y="407.500" width="25" height="19" fill="#fff" stroke="#55545a"/>
<rect x="963.500" y="416.500" width="7" height="5.500" fill="#f4f3f6" stroke="#3a393d"/><path d="M965 416.500v-2a2 2 0 0 1 4 0v2" stroke="#3a393d" stroke-width="1.100"/><rect x="966.500" y="418.500" width="1.200" height="2" fill="#3a393d"/>
</svg>
<div class="t ln" style="left:852px;top:261px">形状 1</div>
<div class="t ln" style="left:857px;top:292px">椭圆 1 副本</div>
<div class="t ln" style="left:857px;top:323px">椭圆 1</div>
<div class="t ln" style="left:857px;top:354px">矩形 2</div>
<div class="t ln" style="left:857px;top:385px">矩形 1</div>
<div class="t ln" style="left:858px;top:413px;font-style:italic">背景</div>
<!-- bottom bar -->
<div class="a" style="left:798px;top:479px;width:198px;height:16px;background:#dcd9e0;border-top:1px solid #a9a7ad"></div>
<svg class="a" style="left:830px;top:480px" width="166" height="15" viewBox="830 480 166 15" fill="none" stroke="#3a393d" stroke-width="1">
<rect x="834.500" y="485" width="5.500" height="5" rx="2.500" stroke="#8d8b91" stroke-width="1.300"/><rect x="840" y="485" width="5.500" height="5" rx="2.500" stroke="#8d8b91" stroke-width="1.300"/><path d="M837.500 487.500h5" stroke="#8d8b91" stroke-width="1.300"/>
<path d="M868 492.500h1.500v-1.500z" fill="#3a393d"/>
<rect x="878.500" y="483.500" width="10" height="8" fill="#77757b"/><circle cx="883.500" cy="487.500" r="2.300" fill="#f4f3f6" stroke="none"/>
<circle cx="904.500" cy="487.500" r="4" fill="#f4f3f6"/><path d="M904.500 483.500a4 4 0 0 0-2.800 6.800z" fill="#3a393d"/><path d="M901.700 490.300a4 4 0 0 0 5.600-5.600z" fill="#4a494e" stroke="none"/><path d="M911 492.500h1.500v-1.500z" fill="#3a393d"/>
<path d="M921.500 491.500v-8h3.500l1 1.500h5.500v6.500z" fill="#b3b1b7"/>
<path d="M943.500 483.500h8v5.500l-2.500 2.500h-5.500z" fill="#e9e7ec"/><path d="M951.500 489h-2.500v2.500" />
<path d="M964.500 485.500h8l-.8 6.500h-6.400z" fill="#4a494e"/><path d="M963.500 484.500h10M967 484v-1.500h3v1.500" stroke-width="1.200"/>
<path d="M994 484l-8 8M994 487l-5 5M994 490l-2 2" stroke="#b3b1b7"/>
</svg>
<div class="t" style="left:857px;top:481px;font-family:'Liberation Serif',serif;font-style:italic;font-weight:bold;font-size:12px;color:#2a292d">fx</div>
<!-- actions panel -->
<div class="a" style="left:797px;top:494px;width:199px;height:3px;background:#6a686e"></div>
<div class="a" style="left:797px;top:497px;width:199px;height:13px;background:linear-gradient(#8f8d93,#a19fa5);border-bottom:1px solid #7d7b81"></div>
<div class="a" style="left:797px;top:497px;width:49px;height:12px;background:#a3a1a7;border-right:1px solid #6f6d73"></div>
<div class="a" style="left:846px;top:497px;width:30px;height:13px;background:#d9d4db;border-right:1px solid #6f6d73"></div>
<div class="t pt" style="left:802px;top:499px;color:#3a393d">历史记录</div>
<div class="t pt" style="left:852px;top:499px">动作</div>
<svg class="a" style="left:982px;top:500px" width="12" height="8"><path d="M0 2h4l-2 2.500z" fill="#2a292d"/><path d="M5 1.500h6M5 3.500h6M5 5.500h6" stroke="#4a494e" stroke-width="1"/></svg>
<div class="a" style="left:798px;top:510px;width:187px;height:48px;background:#dcd8de"></div>
<div class="a" style="left:815px;top:510px;width:1px;height:48px;background:#a9a7ad"></div>
<div class="a" style="left:831px;top:510px;width:1px;height:48px;background:#a9a7ad"></div>
<div class="a" style="left:798px;top:527px;width:187px;height:1px;background:#b9b7bd"></div>
<div class="a" style="left:798px;top:543px;width:187px;height:1px;background:#b9b7bd"></div>
<div class="a" style="left:985px;top:510px;width:11px;height:48px;background:#e9e7ec;border-left:1px solid #b3b1b7"></div>
<div class="a" style="left:985px;top:525px;width:10px;height:15px;background:#99979d;border-radius:2px"></div>
<svg class="a" style="left:798px;top:510px" width="198" height="48" viewBox="798 510 198 48" fill="none" stroke="#2a292d" stroke-width="1">
<path d="M803 519.500l2.500 3 4.500-7M803 536l2.500 3 4.500-7M803 552.500l2.500 3 4.500-7" stroke-width="1.600"/>
<rect x="819.500" y="515.500" width="8" height="8" fill="#f4f3f6" stroke="#55545a"/><path d="M821.500 519.500h4"/>
<rect x="819.500" y="532.500" width="8" height="8" fill="#f4f3f6" stroke="#55545a"/><path d="M821.500 536.500h4"/>
<rect x="819.500" y="549.500" width="8" height="8" fill="#f4f3f6" stroke="#55545a"/><path d="M821.500 553.500h4"/>
<path d="M835 517h6.500l-3.200 4.500z" fill="#2a292d" stroke="none"/>
<path d="M847.500 523.500v-7.500h4l1 1.500h7v6z" fill="#d9d4db"/><path d="M847.500 523.500l2.500-4.500h11l-2 4.500z" fill="#f4f3f6"/>
<path d="M850 532.500l4 3.500-4 3.500zM850 549l4 3.500-4 3.500z" fill="#2a292d" stroke="none"/>
<path d="M988 520.500l2.500-3 2.500 3z" fill="#2a292d" stroke="none"/>
</svg>
<div class="t" style="left:866px;top:515px;font-size:9.5px">默认动作</div>
<div class="t" style="left:861px;top:531px;font-size:9.5px">淡出效果（选区）</div>
<div class="t" style="left:861px;top:547px;font-size:9.5px">画框通道 - 50 像素</div>
<!-- watermark -->
<svg class="a" style="left:826px;top:531px" width="60" height="28"><g fill="#fff" opacity=".8"><ellipse cx="16" cy="13" rx="6" ry="8"/><ellipse cx="33" cy="14" rx="6" ry="8"/><ellipse cx="4" cy="24" rx="5" ry="6"/><ellipse cx="26" cy="30" rx="10" ry="6"/></g></svg>

<div class="a" style="left:0;top:0;width:1000px;height:1px;background:#6a686e"></div>
<div class="a" style="left:0;top:0;width:1px;height:558px;background:#4a494e"></div>
<div class="a" style="left:999px;top:0;width:1px;height:558px;background:#5f5d63"></div>
<div class="a" style="left:0;top:0;width:2px;height:2px;background:#222"></div>
</body></html>
